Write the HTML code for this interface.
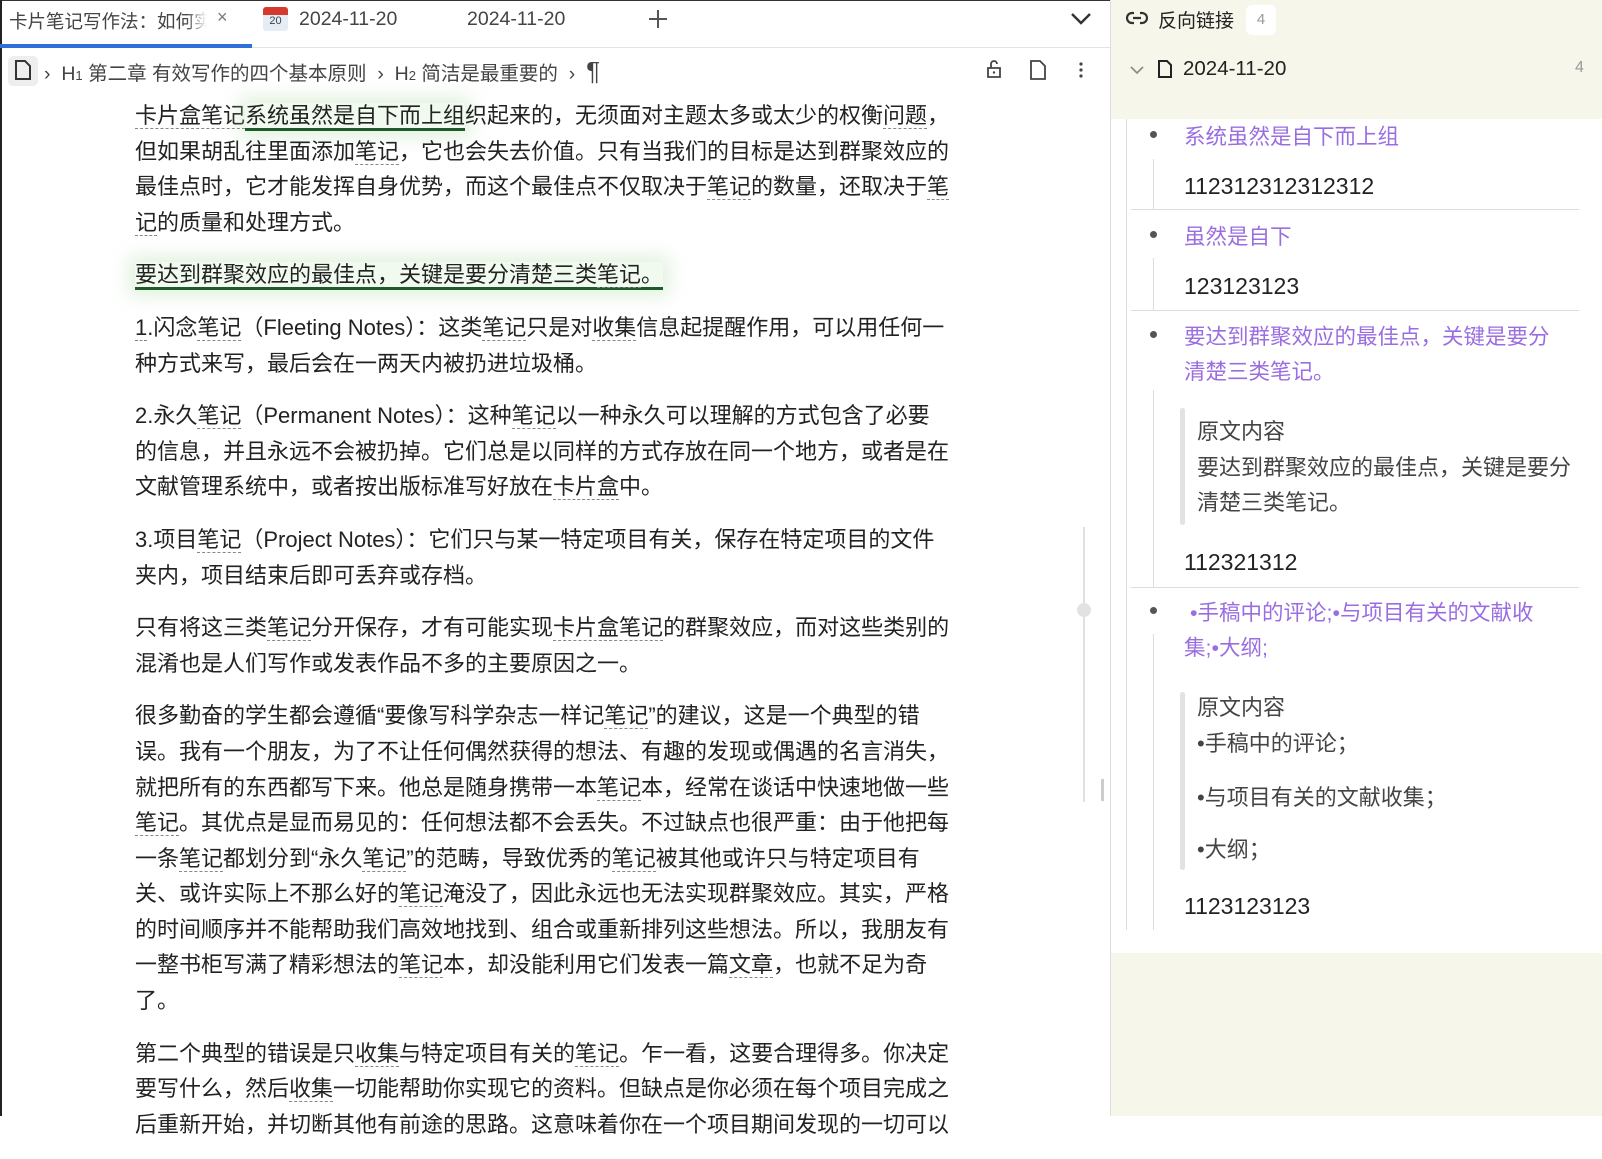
<!DOCTYPE html>
<html><head><meta charset="utf-8"><style>
*{margin:0;padding:0;box-sizing:border-box}
body{width:1602px;height:1116px;overflow:hidden;background:#fff;font-family:"Liberation Sans","Noto Sans CJK SC",sans-serif;color:#222;position:relative}
.abs{position:absolute;white-space:nowrap}
.tabs{position:absolute;left:0;top:0;width:1110px;height:48px;border-bottom:1px solid #e3e3e3;border-top:1px solid #333}
.t{font-size:19.5px;color:#444}
.main{position:absolute;left:135px;top:98px;font-size:22px;line-height:35.6px;color:#222;white-space:nowrap}
.main p{margin-bottom:17px}
.u{border-bottom:1px dashed #888}
.g{border-bottom:3px solid #1f5a2a;box-shadow:0 0 18px 6px rgba(170,215,160,.35);background:rgba(200,235,190,.25)}
.rp{position:absolute;left:1110px;top:0;width:492px;height:1116px;background:#f6f6ea;border-left:1px solid #ddd}
.rw{position:absolute;left:1111px;top:119px;width:491px;height:834px;background:#fff}
.pur{color:#9a6ee0;font-size:21.5px}
.blk{font-size:23px;color:#222}
.gr{color:#444;font-size:22px}
.dot{position:absolute;width:7px;height:7px;border-radius:50%;background:#555}
.vl{position:absolute;width:1px;background:#ddd}
.hl{position:absolute;height:1px;background:#ddd}
</style></head><body>
<div class="tabs"></div>
<div style="position:absolute;left:0;top:0;width:2px;height:1116px;background:#222"></div>
<div class="abs t" style="left:9px;top:8px;font-size:18.5px">卡片笔记写作法：如何实</div>
<div class="abs" style="left:186px;top:6px;width:30px;height:30px;background:linear-gradient(90deg,rgba(255,255,255,0),#fff 70%)"></div>
<div class="abs" style="left:217px;top:7px;font-size:18px;color:#777">×</div>
<div class="abs" style="left:0;top:44px;width:252px;height:4px;background:#2f6fd8"></div>
<div class="abs" style="left:263px;top:7px;width:25px;height:24px;background:#e6ecf3;border-radius:3px;overflow:hidden"><div style="height:8px;background:#d63a2f"></div><div style="font-size:11px;text-align:center;color:#345;line-height:13px">20</div></div>
<div class="abs t" style="left:299px;top:8px">2024-11-20</div>
<div class="abs t" style="left:467px;top:8px">2024-11-20</div>
<svg class="abs" style="left:648px;top:9px" width="20" height="20"><path d="M10 1v18M1 10h18" stroke="#555" stroke-width="2"/></svg>
<svg class="abs" style="left:1070px;top:12px" width="22" height="14"><path d="M2 2l9 9 9-9" stroke="#333" stroke-width="2.4" fill="none"/></svg>

<div class="abs" style="left:8px;top:56px;width:30px;height:30px;background:#eee;border-radius:5px"></div>
<svg class="abs" style="left:14px;top:59px" width="18" height="22"><path d="M2 2h9l5 5v13H2z" stroke="#333" stroke-width="2" fill="none"/></svg>
<div class="abs" style="left:44px;top:57px;font-size:19.5px;color:#444">›&nbsp; H<span style="font-size:13px">1</span> 第二章 有效写作的四个基本原则 &nbsp;›&nbsp; H<span style="font-size:13px">2</span> 简洁是最重要的 &nbsp;›&nbsp; <span style="font-size:26px;line-height:20px">¶</span></div>
<svg class="abs" style="left:985px;top:59px" width="18" height="20"><path d="M3 9h12v9H3zM6 9V5a3 3 0 0 1 6 0" stroke="#444" stroke-width="1.8" fill="none"/><circle cx="9" cy="13.5" r="1.2" fill="#444"/></svg>
<svg class="abs" style="left:1029px;top:59px" width="18" height="22"><path d="M2 2h9l5 5v13H2z" stroke="#444" stroke-width="1.8" fill="none"/></svg>
<svg class="abs" style="left:1078px;top:61px" width="6" height="18"><circle cx="3" cy="3" r="1.6" fill="#444"/><circle cx="3" cy="9" r="1.6" fill="#444"/><circle cx="3" cy="15" r="1.6" fill="#444"/></svg>

<div class="main">
<p><span class="u">卡片盒笔记</span><span class="g">系统虽然是自下而上组</span>织起来的，无须面对主题太多或太少的权衡<span class="u">问题</span>，<br>但如果胡乱往里面添加<span class="u">笔记</span>，它也会失去价值。只有当我们的目标是达到群聚效应的<br>最佳点时，它才能发挥自身优势，而这个最佳点不仅取决于<span class="u">笔记</span>的数量，还取决于<span class="u">笔</span><br><span class="u">记</span>的质量和处理方式。</p>
<p><span class="g">要达到群聚效应的最佳点，关键是要分清楚三类<span class="u">笔记</span>。</span></p>
<p><span class="u">1</span>.闪念<span class="u">笔记</span>（Fleeting Notes）：这类<span class="u">笔记</span>只是对<span class="u">收集</span>信息起提醒作用，可以用任何一<br>种方式来写，最后会在一两天内被扔进垃圾桶。</p>
<p>2.永久<span class="u">笔记</span>（Permanent Notes）：这种<span class="u">笔记</span>以一种永久可以理解的方式包含了必要<br>的信息，并且永远不会被扔掉。它们总是以同样的方式存放在同一个地方，或者是在<br>文献管理系统中，或者按出版标准写好放在<span class="u">卡片盒</span>中。</p>
<p>3.项目<span class="u">笔记</span>（Project Notes）：它们只与某一特定项目有关，保存在特定项目的文件<br>夹内，项目结束后即可丢弃或存档。</p>
<p>只有将这三类<span class="u">笔记</span>分开保存，才有可能实现<span class="u">卡片盒笔记</span>的群聚效应，而对这些类别的<br>混淆也是人们写作或发表作品不多的主要原因之一。</p>
<p>很多勤奋的学生都会遵循“要像写科学杂志一样记<span class="u">笔记</span>”的建议，这是一个典型的错<br>误。我有一个朋友，为了不让任何偶然获得的想法、有趣的发现或偶遇的名言消失，<br>就把所有的东西都写下来。他总是随身携带一本<span class="u">笔记</span>本，经常在谈话中快速地做一些<br><span class="u">笔记</span>。其优点是显而易见的：任何想法都不会丢失。不过缺点也很严重：由于他把每<br>一条<span class="u">笔记</span>都划分到“永久<span class="u">笔记</span>”的范畴，导致优秀的<span class="u">笔记</span>被其他或许只与特定项目有<br>关、或许实际上不那么好的<span class="u">笔记</span>淹没了，因此永远也无法实现群聚效应。其实，严格<br>的时间顺序并不能帮助我们高效地找到、组合或重新排列这些想法。所以，我朋友有<br>一整书柜写满了精彩想法的<span class="u">笔记</span>本，却没能利用它们发表一篇<span class="u">文章</span>，也就不足为奇<br>了。</p>
<p>第二个典型的错误是只<span class="u">收集</span>与特定项目有关的<span class="u">笔记</span>。乍一看，这要合理得多。你决定<br>要写什么，然后<span class="u">收集</span>一切能帮助你实现它的资料。但缺点是你必须在每个项目完成之<br>后重新开始，并切断其他有前途的思路。这意味着你在一个项目期间发现的一切可以</p>
</div>

<div class="abs" style="left:1083px;top:527px;width:2px;height:275px;background:#e0e0e0"></div>
<div class="abs" style="left:1077px;top:603px;width:14px;height:14px;border-radius:50%;background:#e2e2e2"></div>
<div class="abs" style="left:1101px;top:779px;width:3px;height:22px;background:#ccc"></div>

<div class="rp"></div>
<div class="rw"></div>
<svg class="abs" style="left:1126px;top:11px" width="22" height="14"><path d="M8 2H6a5 5 0 0 0 0 10h2M14 2h2a5 5 0 0 1 0 10h-2M7 7h8" stroke="#333" stroke-width="2.2" fill="none"/></svg>
<div class="abs" style="left:1158px;top:6px;font-size:19px;color:#222">反向链接</div>
<div class="abs" style="left:1246px;top:5px;width:30px;height:30px;background:#fff;border-radius:6px;font-size:15px;color:#999;text-align:center;line-height:30px">4</div>
<svg class="abs" style="left:1130px;top:65px" width="14" height="10"><path d="M1 2l6 6 6-6" stroke="#888" stroke-width="1.6" fill="none"/></svg>
<svg class="abs" style="left:1157px;top:59px" width="16" height="20"><path d="M2 2h8l4 4v12H2z" stroke="#222" stroke-width="2" fill="none"/></svg>
<div class="abs" style="left:1183px;top:57px;font-size:20.5px;color:#222">2024-11-20</div>
<div class="abs" style="left:1575px;top:59px;font-size:16px;color:#999">4</div>

<div class="vl" style="left:1126px;top:119px;height:811px"></div>
<div class="dot" style="left:1150px;top:131px"></div>
<div class="abs pur" style="left:1184px;top:120px">系统虽然是自下而上组</div>
<div class="vl" style="left:1153px;top:159px;height:50px"></div>
<div class="abs blk" style="left:1184px;top:173px">112312312312312</div>
<div class="hl" style="left:1131px;top:209px;width:448px"></div>
<div class="dot" style="left:1150px;top:231px"></div>
<div class="abs pur" style="left:1184px;top:220px">虽然是自下</div>
<div class="vl" style="left:1153px;top:258px;height:52px"></div>
<div class="abs blk" style="left:1184px;top:273px">123123123</div>
<div class="hl" style="left:1131px;top:310px;width:448px"></div>
<div class="dot" style="left:1150px;top:331px"></div>
<div class="abs pur" style="left:1184px;top:320px;line-height:35px">要达到群聚效应的最佳点，关键是要分<br>清楚三类笔记。</div>
<div class="vl" style="left:1153px;top:390px;height:197px"></div>
<div class="abs" style="left:1180px;top:408px;width:5px;height:117px;background:#e2e2e2;border-radius:3px"></div>
<div class="abs gr" style="left:1197px;top:414px;line-height:35.5px">原文内容<br>要达到群聚效应的最佳点，关键是要分<br>清楚三类笔记。</div>
<div class="abs blk" style="left:1184px;top:549px">112321312</div>
<div class="hl" style="left:1131px;top:587px;width:448px"></div>
<div class="dot" style="left:1150px;top:607px"></div>
<div class="abs pur" style="left:1184px;top:596px;line-height:35px">&nbsp;•手稿中的评论;•与项目有关的文献收<br>集;•大纲;</div>
<div class="vl" style="left:1153px;top:634px;height:296px"></div>
<div class="abs" style="left:1180px;top:692px;width:5px;height:178px;background:#e2e2e2;border-radius:3px"></div>
<div class="abs gr" style="left:1197px;top:690px;line-height:35.5px">原文内容<br>•手稿中的评论；</div>
<div class="abs gr" style="left:1197px;top:780px">•与项目有关的文献收集；</div>
<div class="abs gr" style="left:1197px;top:832px">•大纲；</div>
<div class="abs blk" style="left:1184px;top:893px">1123123123</div>
</body></html>
